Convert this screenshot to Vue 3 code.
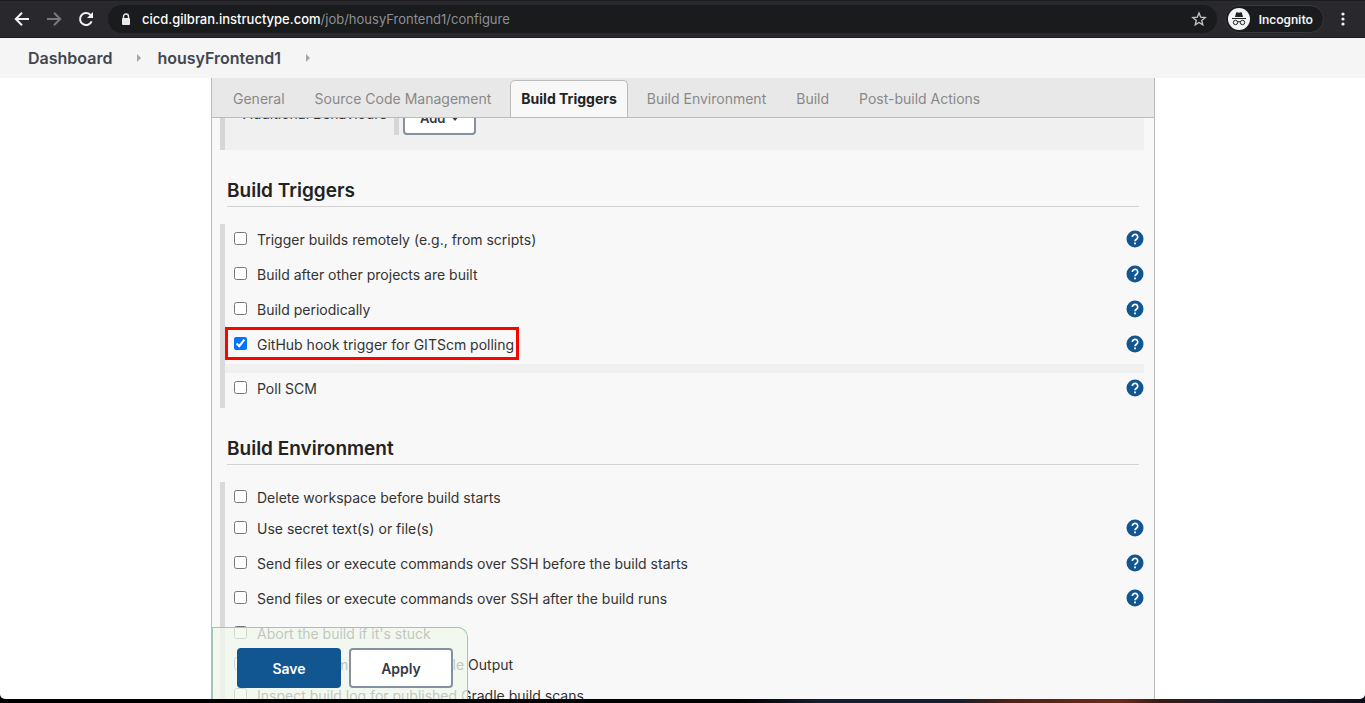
<script setup>
import { ref } from 'vue'

const tabs = ['General', 'Source Code Management', 'Build Triggers', 'Build Environment', 'Build', 'Post-build Actions']
const activeTab = ref('Build Triggers')

const sections = ref([
  {
    title: 'Build Triggers',
    rows: [
      { id: 'remote', label: 'Trigger builds remotely (e.g., from scripts)', help: true, checked: false },
      { id: 'after', label: 'Build after other projects are built', help: true, checked: false },
      { id: 'periodic', label: 'Build periodically', help: true, checked: false },
      { id: 'github', label: 'GitHub hook trigger for GITScm polling', help: true, checked: true, marked: true, strip: true },
      { id: 'poll', label: 'Poll SCM', help: true, checked: false },
    ],
  },
  {
    title: 'Build Environment',
    rows: [
      { id: 'delete', label: 'Delete workspace before build starts', checked: false },
      { id: 'secret', label: 'Use secret text(s) or file(s)', help: true, checked: false },
      { id: 'sshbefore', label: 'Send files or execute commands over SSH before the build starts', help: true, checked: false },
      { id: 'sshafter', label: 'Send files or execute commands over SSH after the build runs', help: true, checked: false },
      { id: 'abort', label: "Abort the build if it's stuck", checked: false },
      { id: 'timestamps', label: 'Add timestamps to the Console Output', checked: false },
      { id: 'gradle', label: 'Inspect build log for published Gradle build scans', checked: false },
    ],
  },
])
</script>

<template>
  <div class="screen">
    <div class="window">
      <header class="toolbar">
        <button class="nav" aria-label="Back">
          <svg width="16" height="16" viewBox="0 0 16 16"><path d="M15 8H2M8 1.800L1.800 8L8 14.200" fill="none" stroke="#f1f3f4" stroke-width="2" /></svg>
        </button>
        <button class="nav" aria-label="Forward">
          <svg width="16" height="16" viewBox="0 0 16 16"><path d="M1 8H14M8 1.800L14.200 8L8 14.200" fill="none" stroke="#77797c" stroke-width="2" /></svg>
        </button>
        <button class="nav" aria-label="Reload">
          <svg width="16" height="16" viewBox="0 0 16 16"><path d="M13.600 10.300A6 6 0 1 1 12.300 3.800L14 5.500" fill="none" stroke="#f1f3f4" stroke-width="2" /><path d="M15 1V7H9Z" fill="#f1f3f4" /></svg>
        </button>
        <div class="address">
          <svg class="lock" width="10" height="13" viewBox="0 0 10 13"><path d="M2.500 5V3.500a2.500 2.500 0 0 1 5 0V5" fill="none" stroke="#e8eaed" stroke-width="1.400" /><rect x="1" y="5" width="8" height="7" rx="1" fill="#e8eaed" /></svg>
          <span class="url"><b>cicd.gilbran.instructype.com</b>/job/housyFrontend1/configure</span>
          <button class="star" aria-label="Bookmark this page">
            <svg width="16" height="16" viewBox="0 0 16 16"><path d="M8 2l1.700 4.200 4.500.300-3.500 2.900 1.100 4.400L8 11.400l-3.800 2.400 1.100-4.400L1.800 6.500l4.500-.300z" fill="none" stroke="#c4c6c9" stroke-width="1.300" /></svg>
          </button>
        </div>
        <button class="incognito">
          <svg width="22" height="22" viewBox="0 0 22 22">
            <circle cx="11" cy="11" r="11" fill="#f1f3f4" />
            <path d="M7 9l1.100-4.300q.200-.700.900-.500l2 .500 2-.500q.700-.200.900.500L15 9z" fill="#202124" />
            <path d="M4 10.500h14M9.600 14q1.400-.800 2.800 0" fill="none" stroke="#202124" />
            <circle cx="7.500" cy="14.500" r="2.200" fill="none" stroke="#202124" />
            <circle cx="14.500" cy="14.500" r="2.200" fill="none" stroke="#202124" />
          </svg>
          Incognito
        </button>
        <button class="more" aria-label="More">
          <svg width="4" height="14" viewBox="0 0 4 14"><g fill="#f1f3f4"><circle cx="2" cy="2" r="1.600" /><circle cx="2" cy="7" r="1.600" /><circle cx="2" cy="12" r="1.600" /></g></svg>
        </button>
      </header>

      <nav class="crumbs" aria-label="Breadcrumb">
        <a href="#">Dashboard</a>
        <svg width="5" height="8" viewBox="0 0 5 8"><path d="M1 0L5 4L1 8Z" fill="#a6a6a6" /></svg>
        <a href="#">housyFrontend1</a>
        <svg width="5" height="8" viewBox="0 0 5 8"><path d="M1 0L5 4L1 8Z" fill="#a6a6a6" /></svg>
      </nav>

      <main class="panel">
        <div class="tabs" role="tablist">
          <button
            v-for="tab in tabs"
            :key="tab"
            class="tab"
            :class="{ active: tab === activeTab }"
            role="tab"
            :aria-selected="tab === activeTab"
            @click="activeTab = tab"
          >{{ tab }}</button>
        </div>

        <form class="form" @submit.prevent>
          <div class="behaviours">
            <span class="behaviours-label">Additional Behaviours</span>
            <div class="behaviours-add">
              <button type="button" class="add">Add
                <svg width="8" height="6" viewBox="0 0 8 6"><path d="M0 1H8L4 6Z" fill="#333a45" /></svg>
              </button>
            </div>
          </div>

          <section v-for="section in sections" :key="section.title">
            <h2>{{ section.title }}</h2>
            <div class="rows">
              <template v-for="row in section.rows" :key="row.id">
                <div class="row" :class="{ tall: row.help }">
                  <label class="option" :class="{ marked: row.marked }" :for="row.id">
                    <input :id="row.id" v-model="row.checked" type="checkbox">
                    <span>{{ row.label }}</span>
                  </label>
                  <button v-if="row.help" type="button" class="help" :aria-label="'Help for ' + row.label">
                    <svg width="18" height="18" viewBox="0 0 18 18">
                      <circle cx="9" cy="9" r="8.500" fill="#115591" />
                      <path d="M6.300 7a2.700 2.700 0 1 1 4.400 2.100C9.500 10 9 10.300 9 11.300" fill="none" stroke="#fff" stroke-width="1.700" />
                      <rect x="8.100" y="12.500" width="1.800" height="1.800" fill="#fff" />
                    </svg>
                  </button>
                </div>
                <div v-if="row.strip" class="strip"></div>
              </template>
            </div>
          </section>
        </form>

        <div class="actions">
          <button class="save">Save</button>
          <button class="apply">Apply</button>
        </div>
      </main>
    </div>
  </div>
</template>

<style>
body {
  margin: 0;
}
</style>

<style scoped>
.screen {
  box-sizing: border-box;
  height: 100vh;
  padding-bottom: 4px;
  background: linear-gradient(90deg, #000 0, #000 54%, #161d2c 60%, #161d2c 70%, #4e2215 74%, #6a2b14 82%, #3a1a14 85%, #1b1d2b 90%, #0c0d18 100%);
  font-family: Inter, "Liberation Sans", sans-serif;
  font-size: 14px;
  color: #333;
  overflow: hidden;
}
.window {
  display: flex;
  flex-direction: column;
  height: 100%;
  background: #fff;
  border-radius: 0 0 5px 5px;
  overflow: hidden;
}
button {
  margin: 0;
  padding: 0;
  border: 0;
  background: none;
  font: inherit;
  color: inherit;
  cursor: pointer;
}
svg {
  display: block;
  flex: none;
}

.toolbar {
  display: flex;
  align-items: center;
  box-sizing: border-box;
  flex: none;
  height: 38px;
  padding: 0 20px 0 14px;
  border-top: 1px solid #1c1b20;
  border-bottom: 1px solid #1c1b20;
  background: #29282d;
}
.nav {
  margin-right: 16px;
}
.address {
  display: flex;
  align-items: center;
  flex: 1;
  height: 28px;
  margin-right: 8px;
  margin-left: -2px;
  padding: 0 10px 0 13px;
  border-radius: 14px;
  background: #191b1c;
}
.lock {
  margin-right: 11px;
}
.url {
  flex: 1;
  font-size: 13px;
  color: #8d9094;
}
.url b {
  font-weight: 500;
  color: #fff;
}
.incognito {
  display: flex;
  align-items: center;
  gap: 8px;
  box-sizing: border-box;
  height: 28px;
  padding: 0 10px 0 2px;
  border: 1px solid #37383b;
  border-radius: 14px;
  background: #191b1c;
  font-family: Roboto, sans-serif;
  font-size: 13px;
  font-weight: 500;
  color: #f1f3f4;
}
.more {
  margin-left: 17px;
}

.crumbs {
  display: flex;
  align-items: center;
  flex: none;
  height: 40px;
  padding: 0 28px;
  background: #f5f5f5;
}
.crumbs a {
  font-size: 16px;
  font-weight: 600;
  color: #3f4751;
  text-decoration: none;
}
.crumbs svg {
  margin: 0 16px 0 24px;
}

.panel {
  position: relative;
  display: flex;
  flex-direction: column;
  flex: 1;
  min-height: 0;
  margin: 0 210px 0 211px;
  border: solid #bbb;
  border-width: 0 1px;
  background: #f8f8f8;
}
.tabs {
  display: flex;
  align-items: flex-end;
  gap: 8px;
  box-sizing: border-box;
  flex: none;
  height: 40px;
  padding-left: 10px;
  border-bottom: 1px solid #bbb;
  background: #e8e8e8;
}
.tab {
  box-sizing: border-box;
  height: 37px;
  padding: 0 10px 2px;
  border: 1px solid transparent;
  border-bottom: 0;
  border-radius: 5px 5px 0 0;
  color: #888;
  white-space: nowrap;
}
.tab.active {
  border-color: #bbb;
  background: #f8f8f8;
  font-weight: 700;
  color: #222;
}

.form {
  flex: 1;
  min-height: 0;
  padding: 0 10px 0 8px;
  overflow: hidden;
}
.behaviours {
  display: flex;
  align-items: flex-end;
  box-sizing: border-box;
  height: 32px;
  padding: 0 0 15px 18px;
  border-left: 5px solid #d6d6d6;
  background: #f0f0f0;
}
.behaviours-label {
  width: 151px;
  padding-bottom: 11px;
  line-height: 20px;
}
.behaviours-add {
  padding-left: 4px;
  border-left: 5px solid #d6d6d6;
}
.add {
  display: flex;
  align-items: center;
  gap: 5px;
  box-sizing: border-box;
  height: 34px;
  padding: 0 15px;
  border: 2px solid #8391a0;
  border-radius: 4px;
  background: #fff;
  font-size: 13px;
  font-weight: 600;
  color: #333a45;
}
h2 {
  margin: 26px 5px 17px 7px;
  border-bottom: 1px solid #d3d3d3;
  font-size: 19px;
  font-weight: 600;
  line-height: 30px;
  color: #222;
}
.rows {
  border-left: 5px solid #dadada;
}
.row {
  display: flex;
  align-items: flex-start;
  justify-content: space-between;
  box-sizing: border-box;
  min-height: 31px;
  padding: 6px 0 5px 9px;
}
.row.tall {
  min-height: 35px;
}
.option {
  position: relative;
  display: flex;
  align-items: flex-start;
  gap: 10px;
  line-height: 20px;
}
.option input {
  width: 13px;
  height: 13px;
  margin: 2px 0 0;
}
.option.marked::after {
  position: absolute;
  inset: -8px -5px -5px -9px;
  border: 3px solid #f90500;
  content: "";
}
.strip {
  height: 9px;
  background: #f0f0f0;
}

.actions {
  position: absolute;
  bottom: 0;
  left: 0;
  display: flex;
  gap: 8px;
  padding: 20px 14px 11px 24px;
  border: solid #a0c6ae;
  border-width: 1px 1px 0 1px;
  border-radius: 0 10px 0 0;
  background: rgba(240, 247, 236, 0.75);
}
.save,
.apply {
  box-sizing: border-box;
  width: 104px;
  height: 40px;
  border-radius: 4px;
  font-weight: 600;
}
.save {
  background: #115591;
  color: #fff;
}
.apply {
  border: 2px solid #8391a0;
  background: #fff;
  color: #333a45;
}
</style>
